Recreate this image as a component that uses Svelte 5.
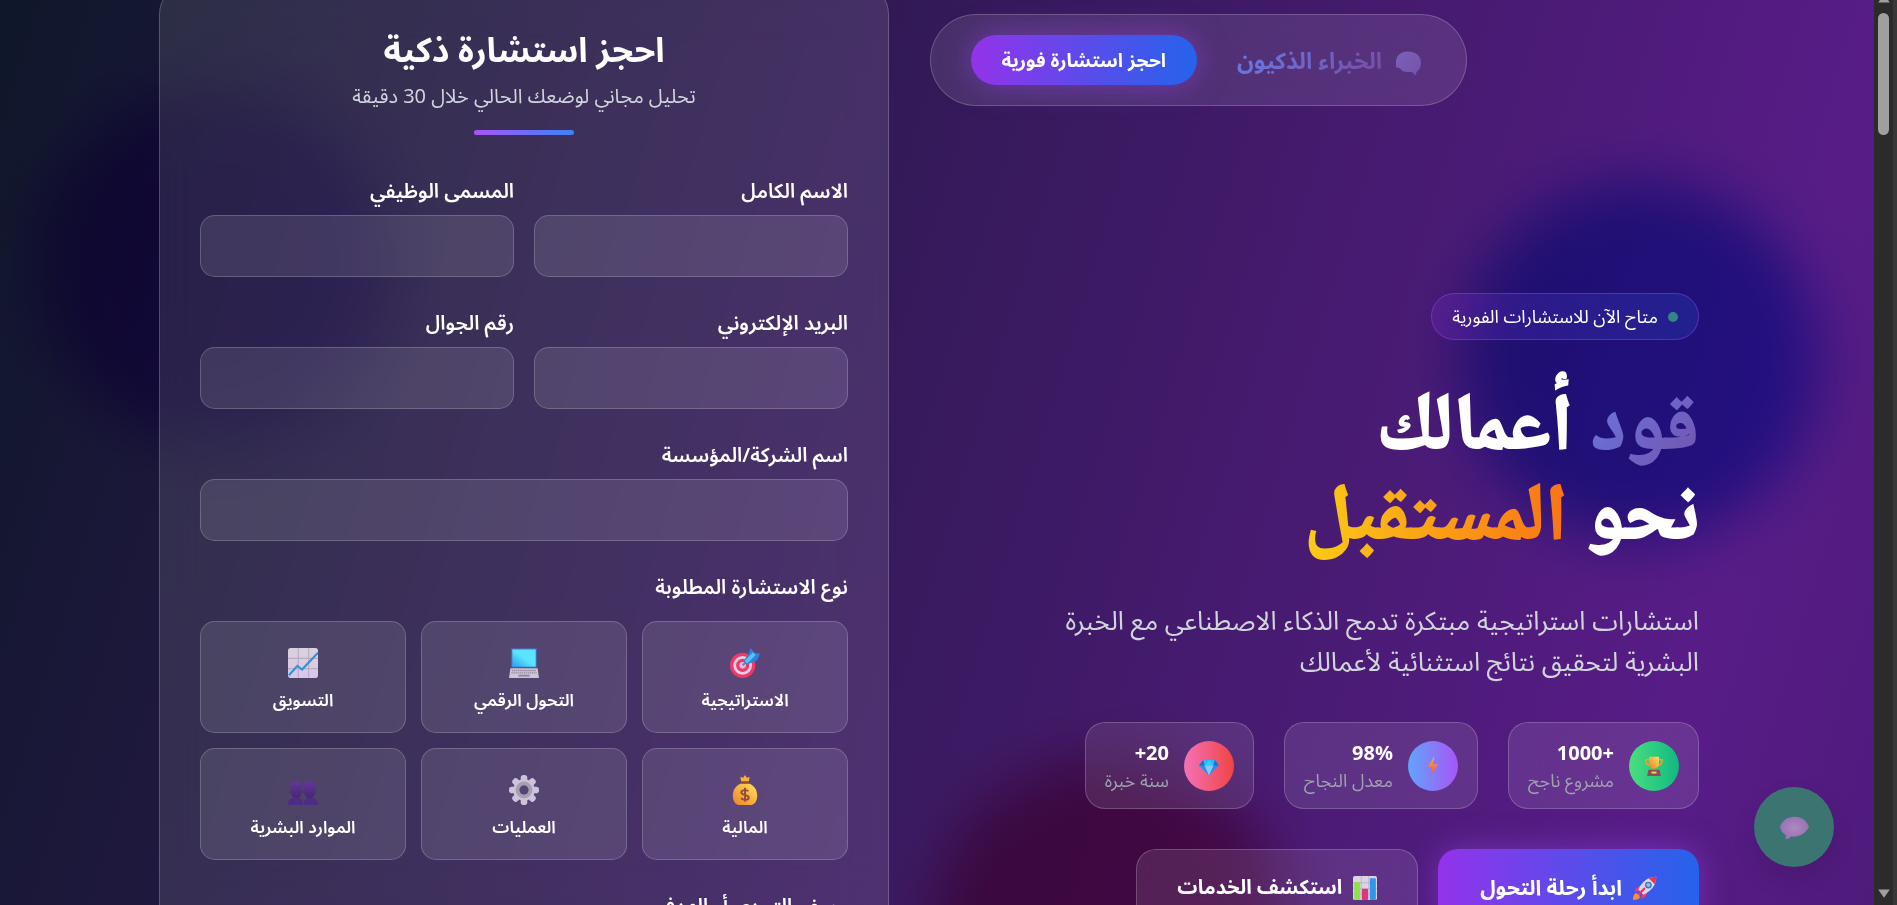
<script>
  const stats = [
    { icon: 'trophy', value: '1000+', label: 'مشروع ناجح', tone: 'green' },
    { icon: 'bolt', value: '98%', label: 'معدل النجاح', tone: 'violet' },
    { icon: 'gem', value: '+20', label: 'سنة خبرة', tone: 'rose' }
  ];
  const fields = [
    { id: 'full-name', label: 'الاسم الكامل', type: 'text' },
    { id: 'job-title', label: 'المسمى الوظيفي', type: 'text' },
    { id: 'email', label: 'البريد الإلكتروني', type: 'email' },
    { id: 'mobile', label: 'رقم الجوال', type: 'tel' }
  ];
  const kinds = [
    { icon: 'target', label: 'الاستراتيجية' },
    { icon: 'laptop', label: 'التحول الرقمي' },
    { icon: 'chart', label: 'التسويق' },
    { icon: 'money', label: 'المالية' },
    { icon: 'gear', label: 'العمليات' },
    { icon: 'people', label: 'الموارد البشرية' }
  ];
</script>

{#snippet glyph(name)}
  <svg viewBox="0 0 32 32" aria-hidden="true">
    {#if name === 'trophy'}
      <path d="M8 6H3c0 6 2 9 7 9M24 6h5c0 6-2 9-7 9" fill="none" stroke="#f59e2d" stroke-width="2.4" />
      <path d="M8 1h16v10c0 6-3 9-8 9s-8-3-8-9z" fill="url(#gold)" />
      <path d="M14 19h4v5h-4z" fill="#f08a24" />
      <path d="M7 22h18l2 10H5z" fill="#8d4d57" />
      <path d="M12 25h8v3h-8z" fill="#fcd34d" />
    {:else if name === 'bolt'}
      <path d="M18 0 8 17h7l-3 15 12-19h-8z" fill="url(#fire)" />
    {:else if name === 'gem'}
      <path d="M7 6h18l7 9-16 16L0 15z" fill="#2b8fe8" />
      <path d="M7 6 0 15h9zM25 6l7 9h-9z" fill="#1d6fd0" />
      <path d="M7 6h9l-7 9zM25 6h-9l7 9z" fill="#39b4f6" />
      <path d="m16 6 7 9H9z" fill="#29d3fb" />
      <path d="M9 15h14l-7 16z" fill="#8cc8ff" />
    {:else if name === 'rocket'}
      <path d="M11 13c-4 0-7 3-9 8l7-1zM19 21c0 4-3 8-8 10l1-7z" fill="#ef3b63" />
      <path d="M3 23c-2 2-3 5-3 9 4 0 7-1 9-3l-1-5z" fill="#ff8f2e" />
      <path d="M31 1C21 1 13 6 7 18l7 7C26 19 31 11 31 1z" fill="#ddd6ea" />
      <path d="M31 1c-4 0-7 .700-10 2l8 8c1.300-3 2-6 2-10z" fill="#f0344f" />
      <circle cx="20.500" cy="12" r="4.500" fill="#4b6fb4" /><circle cx="20.500" cy="12" r="2.800" fill="#6cc7f5" />
      <path d="m8 24 7-7" stroke="#e33468" stroke-width="3" stroke-linecap="round" />
    {:else if name === 'bars'}
      <rect x="0" y="0" width="32" height="32" rx="2.500" fill="#dcd3e6" />
      <path d="M0 9h32M0 17h32M0 24h32M11 0v32M21 0v32" stroke="#b9a9c9" />
      <rect x="1.500" y="8" width="8" height="24" rx="1" fill="#8fe04c" />
      <rect x="12" y="17" width="8" height="15" rx="1" fill="#e0347c" />
      <rect x="22.500" y="3" width="8" height="29" rx="1" fill="#2f97e8" />
    {:else if name === 'target'}
      <circle cx="13.500" cy="18.500" r="13.500" fill="#ee3a68" /><circle cx="13.500" cy="18.500" r="10" fill="#e0cfe6" />
      <circle cx="13.500" cy="18.500" r="7" fill="#ee3a68" /><circle cx="13.500" cy="18.500" r="3.500" fill="#d8bfd6" />
      <path d="m13.500 18.500 5-5" stroke="#7d7391" stroke-width="2" />
      <path d="m15 13 5-7 2-6 4 5 6 1-3 7-7 3-4 2z" fill="#2587dc" />
      <path d="m17 15 9-9" stroke="#5cc0f7" stroke-width="4" />
    {:else if name === 'laptop'}
      <rect x="2" y="0" width="28" height="21" rx="1.500" fill="#4b62a4" />
      <rect x="3.500" y="1.500" width="25" height="18.500" fill="url(#screen)" />
      <path d="M1.500 21.500h29L32 32H0z" fill="#cfc5d8" />
      <path d="M3 24h26M2.500 26.500h27" stroke="#958ba3" stroke-width="1.500" stroke-dasharray="1.500 .7" />
      <path d="M10 28.500h12v2H10z" fill="#8f859c" />
    {:else if name === 'chart'}
      <rect x="0" y="0" width="32" height="32" rx="3" fill="url(#paper)" />
      <path d="M0 11h32M0 22h32M11 0v32M22 0v32" stroke="#b9acc8" stroke-width="1.200" />
      <path d="m1 29 9-10 5 4L32 5" fill="none" stroke="#2f92d8" stroke-width="2.200" />
    {:else if name === 'money'}
      <path d="m11 2 3 1 2-3 2 3 3-1-1 5h-8z" fill="#f9b13a" />
      <path d="M12 9C6 11 3 16 3 22c0 6 3 10 8 10h10c5 0 8-4 8-10 0-6-3-11-9-13z" fill="url(#gold)" />
      <path d="M12 8h8" stroke="#8f5730" stroke-width="2.600" />
      <path d="M19.500 17.500c-1-2-7.500-2-7.500 1 0 4 8 2 8 5.500 0 3.500-7 3-8 .500M16 13.500v15" fill="none" stroke="#8f4d3b" stroke-width="2" />
    {:else if name === 'gear'}
      {#each [0, 45, 90, 135] as turn}
        <rect x="12.500" y="0" width="7" height="32" rx="3" fill="#cfc3dc" transform={`rotate(${turn} 16 16)`} />
      {/each}
      <circle cx="16" cy="16" r="11.500" fill="#cfc3dc" /><circle cx="16" cy="16" r="7" fill="none" stroke="#a79fb2" stroke-width="4" />
      <circle cx="16" cy="16" r="5" fill="#554473" />
    {:else if name === 'people'}
      <g fill="url(#plum)">
        <path d="M3 12c0-3 2-5 6-5s6 2 6 5v5h1v2h-1c-1 4-3 6-6 6s-5-2-6-6H1.500v-2H3z" />
        <path d="M17 12c0-3 2-5 6-5s6 2 6 5v5h1.500v2H29c-1 4-3 6-6 6s-5-2-6-6h-1v-2h1z" />
      </g>
      <path d="M0 32c0-5 3-8 8.500-8s8 3 8 8zM17 32c0-5 2-8 7-8s8 3 8 8z" fill="#4d2c86" />
    {:else if name === 'brain'}
      <path d="M15 2C6 2 0 8 0 15v7c2 0 4 1 6 2 1 3 4 4 8 4h6c1 0 2 1 3 3 1 1 3 1 3-1v-2c4-2 6-6 6-12C32 7 24 2 15 2z" fill="url(#brand)" />
    {:else}
      <path d="M16 4C8 4 3 8 0 15c1 5 3 7 6 9 1 2 0 3 0 5 3 0 5-1 6-3 10 1 17-4 20-11-3-7-8-11-16-11z" fill="url(#lilac)" />
    {/if}
  </svg>
{/snippet}

<svg class="defs" aria-hidden="true">
  <defs>
    <linearGradient id="gold" x1="0" y1="1" x2="1" y2="0"><stop stop-color="#ee8128" /><stop offset="1" stop-color="#ffe25a" /></linearGradient>
    <linearGradient id="fire" x1="0" y1="0" x2="0" y2="1"><stop stop-color="#ffad42" /><stop offset="1" stop-color="#f4513c" /></linearGradient>
    <linearGradient id="screen" x1="0" y1="1" x2="1" y2="0"><stop offset=".1" stop-color="#32aaf9" /><stop offset=".5" stop-color="#5ae4ff" /></linearGradient>
    <linearGradient id="paper" x1="0" y1="0" x2="0" y2="1"><stop stop-color="#d9d2de" /><stop offset="1" stop-color="#d8c7e8" /></linearGradient>
    <linearGradient id="plum" x1="0" y1="0" x2="0" y2="1"><stop stop-color="#65369a" /><stop offset="1" stop-color="#43286f" /></linearGradient>
    <linearGradient id="brand" x1="0" y1="0" x2="1" y2="1"><stop stop-color="#7a61b8" /><stop offset="1" stop-color="#7553a8" /></linearGradient>
    <radialGradient id="lilac"><stop stop-color="#ab8abd" /><stop offset="1" stop-color="#9b72b6" /></radialGradient>
  </defs>
</svg>

<div class="page" dir="rtl">
  <div class="blob blue"></div>
  <div class="blob purple"></div>
  <div class="blob pink"></div>

  <main class="layout">
    <section class="hero">
      <div class="status"><span class="dot"></span>متاح الآن للاستشارات الفورية</div>
      <h1><span class="brand">قود</span> أعمالك<br />نحو <span class="sun">المستقبل</span></h1>
      <p class="lead">استشارات استراتيجية مبتكرة تدمج الذكاء الاصطناعي مع الخبرة البشرية لتحقيق نتائج استثنائية لأعمالك</p>
      <div class="stats">
        {#each stats as s}
          <div class="stat glass">
            <span class="badge {s.tone}">{@render glyph(s.icon)}</span>
            <div><strong dir="ltr">{s.value}</strong><small>{s.label}</small></div>
          </div>
        {/each}
      </div>
      <div class="actions">
        <button class="cta primary" type="button">{@render glyph('rocket')}ابدأ رحلة التحول</button>
        <button class="cta secondary glass" type="button">{@render glyph('bars')}استكشف الخدمات</button>
      </div>
    </section>

    <form class="booking glass">
      <header>
        <h2>احجز استشارة ذكية</h2>
        <p>تحليل مجاني لوضعك الحالي خلال 30 دقيقة</p>
        <div class="rule"></div>
      </header>
      <div class="pair">
        {#each fields as f}
          <div class="field"><label for={f.id}>{f.label}</label><input id={f.id} type={f.type} /></div>
        {/each}
      </div>
      <div class="field"><label for="company">اسم الشركة/المؤسسة</label><input id="company" type="text" /></div>
      <div class="field kinds-field">
        <span class="caption" id="kind-caption">نوع الاستشارة المطلوبة</span>
        <div class="kinds" role="group" aria-labelledby="kind-caption">
          {#each kinds as k}
            <button class="kind" type="button">{@render glyph(k.icon)}<span>{k.label}</span></button>
          {/each}
        </div>
      </div>
      <div class="field"><label for="challenge">وصف التحدي أو الهدف</label><textarea id="challenge" rows="4"></textarea></div>
    </form>
  </main>

  <nav class="bar glass">
    <a class="logo" href="#top">{@render glyph('brain')}<span>الخبراء الذكيون</span></a>
    <button class="book" type="button">احجز استشارة فورية</button>
  </nav>

  <button class="chat" type="button" aria-label="محادثة">{@render glyph('bubble')}</button>
</div>

<div class="scrollbar" aria-hidden="true">
  <svg class="arrow up" viewBox="0 0 12 10"><path d="M6 1 11 8H1z" /></svg>
  <div class="thumb"></div>
  <svg class="arrow down" viewBox="0 0 12 10"><path d="M6 9 11 2H1z" /></svg>
</div>

<style>
  :global(body) { overflow: hidden; background: #0f172a; }
  * { box-sizing: border-box; }
  .defs { position: absolute; width: 0; height: 0; }

  .page {
    position: relative;
    isolation: isolate;
    height: 100vh;
    overflow: hidden;
    padding-right: 39px;
    background: linear-gradient(to bottom right, #0f172a, #581c87, #0f172a) 0 0 / 100% 6400px;
    color: #fff;
    font-family: 'Segoe UI', 'Noto Sans Arabic', 'Noto Sans', 'DejaVu Sans Condensed', 'DejaVu Sans', sans-serif;
    font-size: 20px;
    line-height: 30px;
  }
  button, input, textarea { font: inherit; color: inherit; }
  button { cursor: pointer; }
  h1, h2, p { margin: 0; }

  .glass { background: rgba(255, 255, 255, .1); border: 1px solid rgba(255, 255, 255, .2); backdrop-filter: blur(20px); }

  .blob { position: absolute; width: 360px; height: 360px; border-radius: 50%; filter: blur(30px); mix-blend-mode: multiply; }
  .blue { top: 180px; right: 77px; background: #648cf0; }
  .purple { top: 85px; left: 35px; background: #a855f7; }
  .pink { top: 755px; left: 930px; background: #ec4899; }

  .layout { position: relative; max-width: 1540px; margin: 0 auto; display: grid; grid-template-columns: 1fr 1fr; gap: 80px; align-items: start; }
  .hero { padding-top: 293px; }
  .status {
    display: inline-flex; align-items: center; gap: 10px; height: 47px; padding: 0 20px;
    border: 1px solid rgba(168, 85, 247, .35); border-radius: 24px;
    background: linear-gradient(to left, rgba(37, 99, 235, .2), rgba(147, 51, 234, .2));
    font-size: 18px;
  }
  .dot { width: 10px; height: 10px; border-radius: 50%; background: #34858a; }
  h1 { margin-top: 47px; font-family: 'Noto Naskh Arabic', 'FreeSerif', 'Noto Sans Arabic', 'DejaVu Sans Condensed', serif; font-size: 80px; line-height: 90px; font-weight: 700; white-space: nowrap; -webkit-text-stroke: 2px; }
  h1 span { padding: 10px 0; background-clip: text; -webkit-background-clip: text; color: transparent; }
  .brand { background-image: linear-gradient(135deg, #667eea, #764ba2); }
  .sun { background-image: linear-gradient(to left, #f97316, #facc15); }
  .lead { max-width: 650px; margin-top: 34px; color: #d1d5db; font-size: 26px; line-height: 41px; }
  .stats { display: flex; gap: 30px; margin-top: 39px; }
  .stat { display: flex; align-items: center; gap: 15px; height: 87px; padding: 0 19px; border-radius: 20px; }
  .stat strong, .stat small { display: block; text-align: right; white-space: nowrap; }
  .stat strong { padding-top: 2px; }
  .stat small { color: #9ca3af; font-size: 18px; line-height: 25px; }
  .badge { display: grid; place-items: center; width: 50px; height: 50px; border-radius: 50%; }
  .badge svg { width: 20px; height: 20px; }
  .green { background: linear-gradient(to left, #10b981, #4ade80); }
  .violet { background: linear-gradient(to left, #a855f7, #60a5fa); }
  .rose { background: linear-gradient(to left, #ef4444, #f472b6); }
  .actions { display: flex; gap: 20px; margin-top: 40px; }
  .cta { display: flex; align-items: center; gap: 11px; height: 78px; padding: 0 42px; border-radius: 20px; font-size: 21px; font-weight: 700; white-space: nowrap; }
  .cta svg { width: 24px; height: 24px; }
  .secondary { padding: 0 40px; font-size: 20px; }
  .primary { border: 0; background: linear-gradient(to left, #2563eb, #9333ea); box-shadow: 0 0 30px rgba(147, 71, 234, .5); }

  .booking { margin-top: -16px; padding: 40px; border-radius: 30px; display: grid; gap: 30px; }
  header { text-align: center; padding-bottom: 10px; }
  h2 { padding-top: 4px; font-size: 34px; line-height: 45px; font-weight: 700; }
  header p { margin-top: 8px; color: #d1d5db; }
  .rule { width: 100px; height: 5px; margin: 18px auto 0; border-radius: 3px; background: linear-gradient(to left, #3b82f6, #a855f7); }
  .pair { display: grid; grid-template-columns: 1fr 1fr; gap: 30px 20px; }
  .field { display: grid; gap: 8px; }
  label, .caption { padding-top: 2px; font-weight: 600; }
  input, textarea { width: 100%; height: 62px; padding: 15px 20px; border: 1px solid rgba(255, 255, 255, .2); border-radius: 15px; background: rgba(255, 255, 255, .1); }
  textarea { height: 160px; resize: none; }
  .kinds-field { gap: 18px; }
  .kinds { display: grid; grid-template-columns: repeat(3, 1fr); gap: 15px; }
  .kind {
    display: flex; flex-direction: column; align-items: center; gap: 11px; padding: 26px 20px 18px;
    border: 1px solid rgba(255, 255, 255, .2); border-radius: 15px; background: rgba(255, 255, 255, .1);
    font-size: 17px; line-height: 25px; font-weight: 600; white-space: nowrap;
  }
  .kind svg { width: 30px; height: 30px; }

  .bar { position: absolute; top: 14px; left: 49%; display: flex; align-items: center; gap: 40px; height: 92px; padding: 0 40px; border-radius: 46px; }
  .logo { display: flex; align-items: center; gap: 14px; padding: 4px 5px 0 0; font-size: 23px; line-height: 36px; font-weight: 700; text-decoration: none; white-space: nowrap; }
  .logo svg { width: 25px; height: 25px; }
  .logo span { background: linear-gradient(135deg, #667eea, #764ba2); background-clip: text; -webkit-background-clip: text; color: transparent; }
  .book { height: 50px; padding: 2px 31px 0; border: 0; border-radius: 25px; background: linear-gradient(to left, #2563eb, #9333ea); box-shadow: 0 0 30px rgba(147, 71, 234, .5); font-size: 19px; font-weight: 700; white-space: nowrap; }

  .chat { position: absolute; right: 63px; bottom: 38px; width: 80px; height: 80px; display: grid; place-items: center; padding: 0; border: 0; border-radius: 50%; background: #3b7470; box-shadow: 0 12px 25px rgba(0, 0, 0, .1); }
  .chat svg { width: 29px; height: 29px; }

  .scrollbar { position: fixed; inset: 0 0 0 auto; width: 23px; border-right: 4px solid #383838; background: #2b2b2b; display: flex; flex-direction: column; align-items: center; }
  .arrow { width: 14px; height: 12px; fill: #9f9f9f; }
  .up { margin-top: -7px; }
  .thumb { width: 11px; height: 122px; margin-top: 8px; border-radius: 6px; background: #9f9f9f; }
  .down { margin-top: auto; margin-bottom: 6px; }
</style>
